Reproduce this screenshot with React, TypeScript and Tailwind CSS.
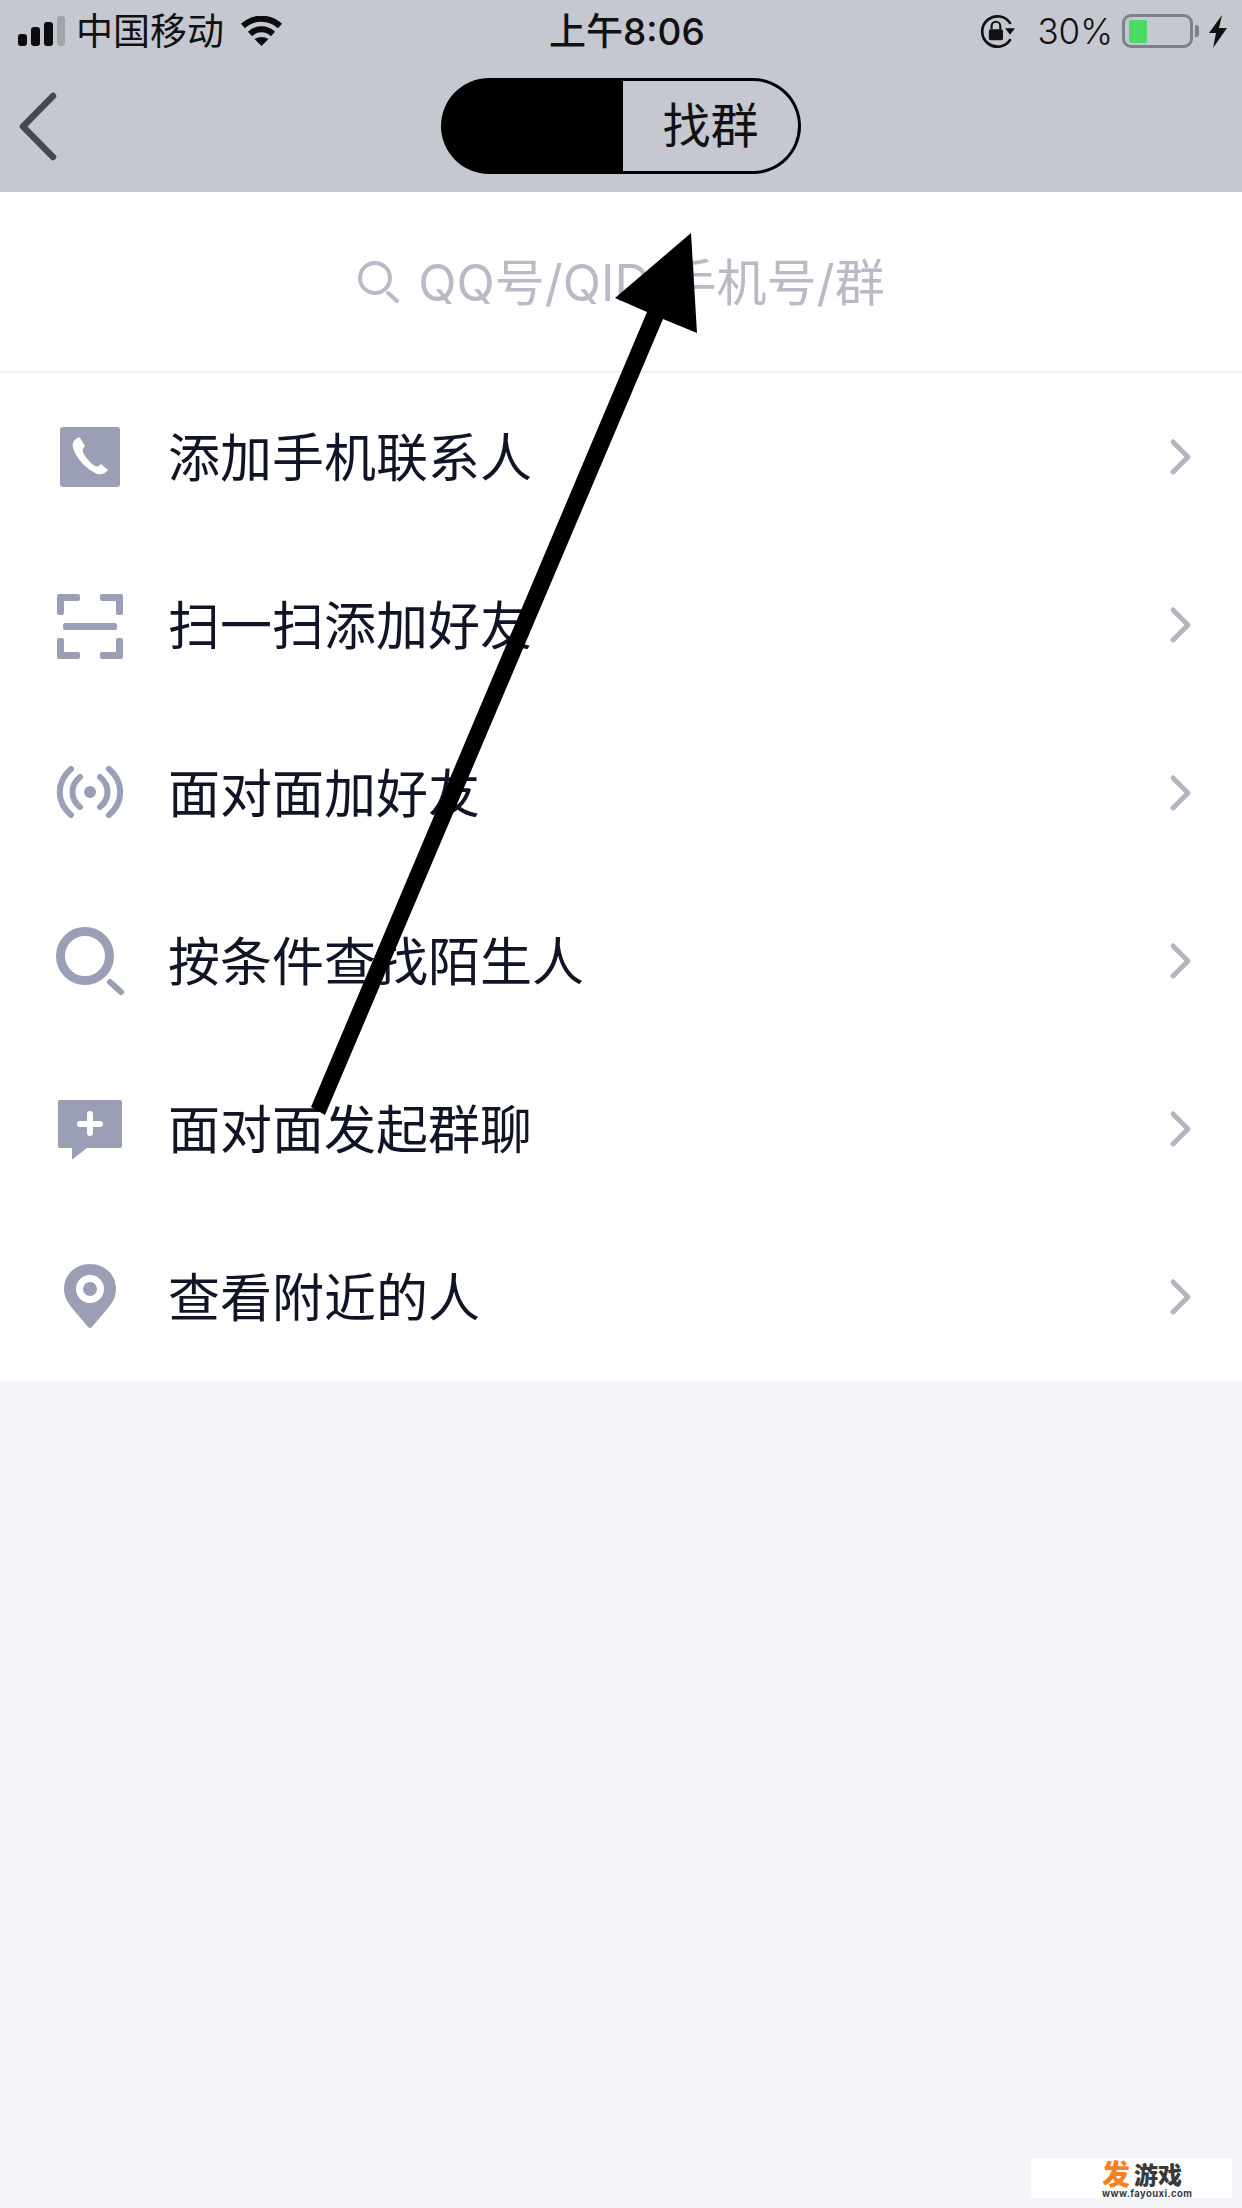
const FONT = "font-['Inter','Noto_Sans_CJK_SC',sans-serif]";

const ICON = '#9a9fb6';

function PhoneIcon() {
  return (
    <svg width="80" height="80" viewBox="0 0 80 80">
      <rect x="10" y="10" width="60" height="60" rx="3" fill={ICON} />
      <path
        d="M26 22 C23 24 22 27 23 31 C26 41 36 52 47 57 C51 58 55 57 58 53 L51 47 C49 49 47 50 45 49 C40 46 35 40 33 35 C32 33 33 31 35 29 L30 21 C29 20 27 21 26 22 Z"
        fill="#fff"
      />
    </svg>
  );
}

function ScanIcon() {
  return (
    <svg width="80" height="80" viewBox="0 0 80 80" fill={ICON}>
      <path d="M7 11 a2 2 0 0 1 2-2 h19 a2 2 0 0 1 2 2 v3 a2 2 0 0 1-2 2 h-14 v12 a2 2 0 0 1-2 2 h-3 a2 2 0 0 1-2-2 Z" />
      <path d="M73 11 a2 2 0 0 0-2-2 h-19 a2 2 0 0 0-2 2 v3 a2 2 0 0 0 2 2 h14 v12 a2 2 0 0 0 2 2 h3 a2 2 0 0 0 2-2 Z" />
      <path d="M7 72 a2 2 0 0 0 2 2 h19 a2 2 0 0 0 2-2 v-3 a2 2 0 0 0-2-2 h-14 v-12 a2 2 0 0 0-2-2 h-3 a2 2 0 0 0-2 2 Z" />
      <path d="M73 72 a2 2 0 0 1-2 2 h-19 a2 2 0 0 1-2-2 v-3 a2 2 0 0 1 2-2 h14 v-12 a2 2 0 0 1 2-2 h3 a2 2 0 0 1 2 2 Z" />
      <rect x="13" y="38" width="54" height="7" rx="2.5" />
    </svg>
  );
}

function RadarIcon() {
  return (
    <svg width="80" height="80" viewBox="0 0 80 80" fill="none" stroke={ICON} strokeWidth="6" strokeLinecap="round">
      <circle cx="40" cy="39" r="6" fill={ICON} stroke="none" />
      <path d="M21 16 C6 29 6 49 21 62" />
      <path d="M59 16 C74 29 74 49 59 62" />
      <path d="M30 24 C20 32 20 46 30 54" />
      <path d="M50 24 C60 32 60 46 50 54" />
    </svg>
  );
}

function SearchIcon() {
  return (
    <svg width="80" height="80" viewBox="0 0 80 80" fill="none" stroke={ICON} strokeLinecap="round">
      <circle cx="35" cy="35" r="24.5" strokeWidth="9" />
      <path d="M60 61 L71 71" strokeWidth="6" />
    </svg>
  );
}

function ChatPlusIcon() {
  return (
    <svg width="80" height="80" viewBox="0 0 80 80">
      <path
        d="M8 13 a2 2 0 0 1 2-2 h60 a2 2 0 0 1 2 2 v44 a2 2 0 0 1-2 2 h-33 l-14 11 q-1 1-1-1 v-10 h-12 a2 2 0 0 1-2-2 Z"
        fill={ICON}
      />
      <path d="M40 25 v19 M30 35 h20" stroke="#fff" strokeWidth="6" strokeLinecap="round" />
    </svg>
  );
}

function PinIcon() {
  return (
    <svg width="80" height="80" viewBox="0 0 80 80">
      <path
        d="M40 7 C25 7 14 18 14 32 C14 40 18 46 22 51 L38 70 Q40 72 42 70 L58 51 C62 46 66 40 66 32 C66 18 55 7 40 7 Z"
        fill={ICON}
      />
      <circle cx="40" cy="32" r="10.500" fill={ICON} stroke="#fff" strokeWidth="7" />
    </svg>
  );
}

const rows = [
  { label: '添加手机联系人', icon: <PhoneIcon /> },
  { label: '扫一扫添加好友', icon: <ScanIcon /> },
  { label: '面对面加好友', icon: <RadarIcon /> },
  { label: '按条件查找陌生人', icon: <SearchIcon /> },
  { label: '面对面发起群聊', icon: <ChatPlusIcon /> },
  { label: '查看附近的人', icon: <PinIcon /> },
];

function StatusBar() {
  return (
    <div className="flex h-[62px] items-center text-[37px] text-[#111] pl-[18px] pr-[15px]">
      <div className="flex w-[531px] items-center">
        <div className="flex h-[30px] w-[47px] items-end gap-[4px]">
          <span className="h-[12px] w-[9px] rounded-[3px] bg-[#0c0c0e]" />
          <span className="h-[19px] w-[9px] rounded-[3px] bg-[#0c0c0e]" />
          <span className="h-[24px] w-[9px] rounded-[3px] bg-[#0c0c0e]" />
          <span className="h-[30px] w-[8px] rounded-[3px] bg-[#a0a3aa]" />
        </div>
        <span className="ml-[11px] leading-none">中国移动</span>
        <svg className="ml-[16px]" width="43" height="30" viewBox="0 0 43 30" fill="none" stroke="#0c0c0e" strokeWidth="6">
          <path d="M3 10 A27 27 0 0 1 40 10" />
          <path d="M10 18 A16.5 16.5 0 0 1 33 18" />
          <path d="M14.5 23 Q21.5 19 28.5 23 L21.5 30 Z" fill="#0c0c0e" stroke="none" />
        </svg>
      </div>
      <span className="font-medium leading-none">上午8:06</span>
      <div className="ml-auto flex items-center">
        <svg width="38" height="35" viewBox="0 0 35 32" fill="none">
          <path d="M30 9 A14 14 0 1 0 30 23" stroke="#111" strokeWidth="2.5" />
          <path d="M25 13 L34 13 L29.500 19 Z" fill="#111" />
          <rect x="10" y="14" width="13" height="10" rx="1.5" fill="#111" />
          <path d="M12.500 14 V11 a4 4 0 0 1 8 0 V14" stroke="#111" strokeWidth="2" />
        </svg>
        <span className="ml-[21px] text-[35px] font-light leading-none">30%</span>
        <div className="ml-[9px] flex h-[34px] w-[71px] items-center rounded-[9px] border-[3px] border-[#7f8186] pl-[4px]">
          <div className="h-[23px] w-[18px] rounded-[2px] bg-[#4cd964]" />
        </div>
        <div className="ml-[2px] h-[12px] w-[4px] rounded-r-[3px] bg-[#7f8186]" />
        <svg className="ml-[10px]" width="18" height="33" viewBox="0 0 18 33">
          <polygon points="13,0 0,18 7,18 4,33 18,13 10,13" fill="#111" />
        </svg>
      </div>
    </div>
  );
}

export default function App() {
  return (
    <div className={`relative flex h-[2208px] w-[1242px] flex-col overflow-hidden bg-[#f4f5f9] ${FONT}`}>
      <header className="h-[192px] bg-[#c5c8d1]">
        <StatusBar />
        <div className="mt-[16px] flex h-[96px] items-center pl-[16px]">
          <svg width="44" height="71" viewBox="0 0 44 71" fill="none">
            <path d="M37 5 L7 35.500 L37 66" stroke="#46484c" strokeWidth="6.500" strokeLinecap="round" strokeLinejoin="round" />
          </svg>
          <div className="ml-[381px] flex h-[96px] w-[360px]">
            <div className="w-[182px] rounded-l-[48px] bg-black" />
            <div className="flex flex-1 items-center justify-center rounded-r-[48px] border-[3px] border-l-0 border-black text-[48px] text-[#111]">
              找群
            </div>
          </div>
        </div>
      </header>

      <div className="flex h-[181px] items-center justify-center border-b-2 border-[#f2f2f5] bg-white text-[50px] text-[#b8bac6]">
        <svg width="44" height="44" viewBox="0 0 44 44" fill="none" stroke="#b8bac6" strokeLinecap="round">
          <circle cx="18" cy="18" r="15" strokeWidth="4" />
          <path d="M31 33 L40 41" strokeWidth="4" />
        </svg>
        <span className="ml-[17px] pt-[2px] leading-none">QQ号/QID/手机号/群</span>
      </div>

      <ul className="bg-white">
        {rows.map((row) => (
          <li key={row.label} className="flex h-[168px] items-center pl-[50px] pr-[48px]">
            {row.icon}
            <span className="ml-[38px] flex-1 pt-[3px] text-[52px] leading-none text-[#111427]">{row.label}</span>
            <svg width="26" height="40" viewBox="0 0 26 40" fill="none">
              <path d="M5 5 L20 20 L5 35" stroke="#b3b6c0" strokeWidth="5" strokeLinecap="round" strokeLinejoin="round" />
            </svg>
          </li>
        ))}
      </ul>

      {/* hand-drawn arrow laid over the list */}
      <svg className="absolute left-0 top-0" width="1242" height="1200" viewBox="0 0 1242 1200">
        <polygon points="691,233 697,333 663,319 325,1115 311,1107 647,312 615,298" fill="#000" />
      </svg>

      {/* site stamp in the corner */}
      <div className="absolute left-[1031px] top-[2158px] h-[40px] w-[201px] bg-white">
        <div className="absolute left-[71px] top-[3px] flex items-end font-black leading-none">
          <span className="text-[28px] text-[#f5811f]">发</span>
          <span className="mb-[1px] ml-[4px] text-[24px] text-[#3a3a3a]">游戏</span>
        </div>
        <span className="absolute left-[71px] top-[31px] text-[9.5px] font-bold leading-none tracking-[0.4px] text-[#3a3a3a]">
          www.fayouxi.com
        </span>
      </div>
    </div>
  );
}
